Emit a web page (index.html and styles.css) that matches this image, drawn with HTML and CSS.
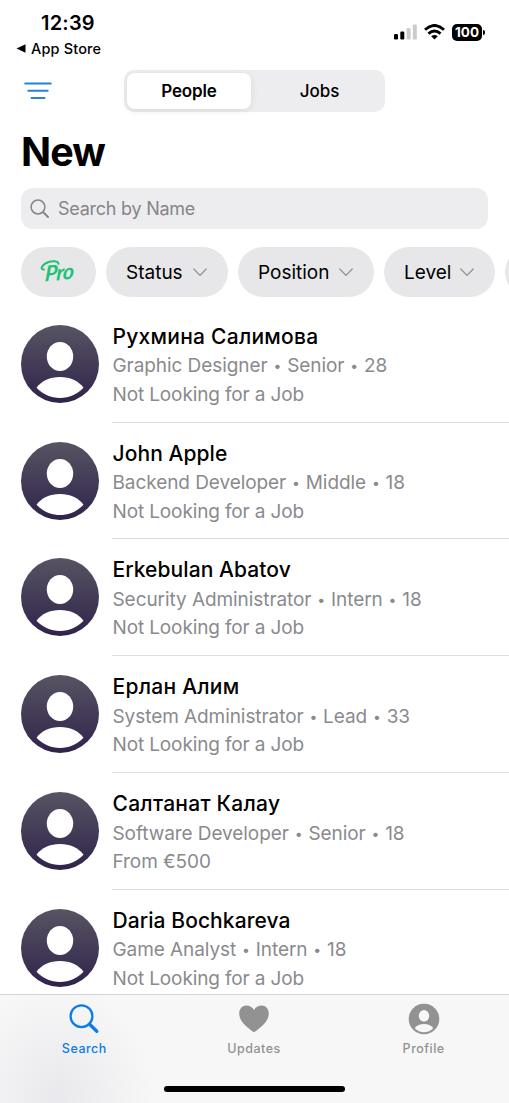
FILE: index.html
```html
<!DOCTYPE html>
<html lang="en">
<head>
<meta charset="utf-8">
<meta name="viewport" content="width=device-width, initial-scale=1">
<title>People</title>
<link rel="stylesheet" href="styles.css">
</head>
<body>
<svg class="defs" width="0" height="0" aria-hidden="true">
  <defs>
    <linearGradient id="avatar-fill" x1="0" y1="0" x2="0" y2="1"><stop offset="0" stop-color="#575463"/><stop offset="1" stop-color="#30234b"/></linearGradient>
    <symbol id="avatar" viewBox="0 0 78 78"><circle cx="39" cy="39" r="39" fill="url(#avatar-fill)"/><ellipse cx="39" cy="31.5" rx="13.2" ry="14.6" fill="#fff"/><path d="M15.5 62.7C20.500 56 29 52 39 52s18.500 4 23.500 10.700C56.500 69.200 48 73 39 73s-17.500-3.800-23.500-10.300Z" fill="#fff"/></symbol>
    <symbol id="chevron" viewBox="0 0 14 9"><path d="M.8 1 7 7.400 13.200 1" fill="none" stroke="#929297" stroke-width="1.300" stroke-linecap="round" stroke-linejoin="round"/></symbol>
  </defs>
</svg>
<div class="screen">
  <header class="status">
    <div class="status-left">
      <div class="clock">12:39</div>
      <div class="back"><svg width="10" height="9" viewBox="0 0 10 9"><path d="M.5 4.500 9.500.3v8.400Z"/></svg><span>App Store</span></div>
    </div>
    <div class="status-right">
      <svg width="23" height="16" viewBox="0 0 23 16"><rect x="0" y="10" width="4" height="5.500" rx="1.200"/><rect x="6.300" y="7.500" width="4" height="8" rx="1.200"/><g fill="#cbcbcb"><rect x="12.600" y="4" width="4" height="11.500" rx="1.200"/><rect x="18.800" y=".5" width="4" height="15" rx="1.200"/></g></svg>
      <svg class="wifi" width="21" height="16" viewBox="0 0 21 16"><g fill="none" stroke="#000" stroke-width="2.900"><path d="M1 5.800Q10.500-2.900 20 5.800"/><path d="M4.500 9.700Q10.500 4.400 16.500 9.700"/></g><path d="M7.200 12.300Q10.500 9.800 13.800 12.300L10.500 15.600Z"/></svg>
      <div class="battery">100</div><i class="battery-tip"></i>
    </div>
  </header>
  <nav class="topbar">
    <svg class="filter" width="28" height="20" viewBox="0 0 28 20"><g stroke="#2583d8" stroke-width="2" stroke-linecap="round"><path d="M1.200 2.500h25.600M4.300 9.800h19.400M7.500 17h13"/></g></svg>
    <div class="segments"><div class="segment active">People</div><div class="segment">Jobs</div></div>
  </nav>
  <h1>New</h1>
  <div class="search"><svg width="20" height="20" viewBox="0 0 20 20"><g fill="none" stroke="#85858a" stroke-linecap="round"><circle cx="8" cy="8" r="6.900" stroke-width="1.500"/><path d="m13.200 13.200 4.800 4.800" stroke-width="2"/></g></svg><span>Search by Name</span></div>
  <div class="filters">
    <div class="chip pro"><span>Pro</span><svg width="24" height="14" viewBox="0 0 24 14"><path d="M4 9.500C-.5 9.500 2 4.500 8 2.200c4.500-1.700 10-1.200 10.500 1.600" fill="none" stroke="#20c374" stroke-width="2" stroke-linecap="round"/></svg></div>
    <div class="chip status-chip"><span>Status</span><svg width="14" height="9"><use href="#chevron"/></svg></div>
    <div class="chip position-chip"><span>Position</span><svg width="14" height="9"><use href="#chevron"/></svg></div>
    <div class="chip level-chip"><span>Level</span><svg width="14" height="9"><use href="#chevron"/></svg></div>
    <div class="chip next-chip"></div>
  </div>
  <main class="list">
    <article class="person"><svg class="avatar"><use href="#avatar"/></svg><div class="info"><h2 lang="ru">Рухмина Салимова</h2><p>Graphic Designer <b>•</b> Senior <b>•</b> 28</p><p class="availability">Not Looking for a Job</p></div></article>
    <article class="person"><svg class="avatar"><use href="#avatar"/></svg><div class="info"><h2>John Apple</h2><p>Backend Developer <b>•</b> Middle <b>•</b> 18</p><p class="availability">Not Looking for a Job</p></div></article>
    <article class="person"><svg class="avatar"><use href="#avatar"/></svg><div class="info"><h2>Erkebulan Abatov</h2><p>Security Administrator <b>•</b> Intern <b>•</b> 18</p><p class="availability">Not Looking for a Job</p></div></article>
    <article class="person"><svg class="avatar"><use href="#avatar"/></svg><div class="info"><h2 lang="ru">Ерлан Алим</h2><p>System Administrator <b>•</b> Lead <b>•</b> 33</p><p class="availability">Not Looking for a Job</p></div></article>
    <article class="person"><svg class="avatar"><use href="#avatar"/></svg><div class="info"><h2 lang="ru">Салтанат Калау</h2><p>Software Developer <b>•</b> Senior <b>•</b> 18</p><p>From €500</p></div></article>
    <article class="person"><svg class="avatar"><use href="#avatar"/></svg><div class="info"><h2>Daria Bochkareva</h2><p>Game Analyst <b>•</b> Intern <b>•</b> 18</p><p class="availability">Not Looking for a Job</p></div></article>
  </main>
  <footer class="tabbar">
    <div class="tabs">
      <div class="tab selected"><svg width="32" height="32" viewBox="0 0 32 32"><g fill="none" stroke="#0d7bea" stroke-linecap="round"><circle cx="13.500" cy="13.200" r="10.900" stroke-width="2.300"/><path d="m21.600 21.300 7.200 7" stroke-width="3.300"/></g></svg><span>Search</span></div>
      <div class="tab"><svg width="32" height="32" viewBox="0 0 32 32"><path d="M16 29.300C9 24.500 1.200 18.200 1.200 10.600 1.200 5.700 4.300 2.400 8.500 2.400c3.200 0 5.900 1.700 7.500 4.500 1.600-2.800 4.300-4.500 7.500-4.500 4.200 0 7.300 3.300 7.300 8.200 0 7.600-7.800 13.900-14.800 18.700Z" fill="#929292"/></svg><span>Updates</span></div>
      <div class="tab"><svg width="32" height="32" viewBox="0 0 32 32"><circle cx="16" cy="16" r="15.300" fill="#929292"/><ellipse cx="16" cy="12.800" rx="5.200" ry="5.800" fill="#f7f7f7"/><path d="M6.800 25.200c2-2.600 5.300-4.100 9.200-4.100s7.200 1.500 9.200 4.100c-2.400 2.600-5.600 4-9.200 4s-6.800-1.400-9.200-4Z" fill="#f7f7f7"/></svg><span>Profile</span></div>
    </div>
    <div class="home"></div>
  </footer>
</div>
</body>
</html>
```
FILE: styles.css
```css
* { box-sizing: border-box; }
body { margin: 0; background: #fff; color: #000; font-family: Inter, "Liberation Sans", sans-serif; }
h1, h2, p { margin: 0; }
svg { display: block; flex: none; }
.defs { position: absolute; }
.screen { width: 509px; height: 1103px; display: flex; flex-direction: column; overflow: hidden; }
.screen > * { flex: none; }

.status { height: 70px; display: flex; justify-content: space-between; padding: 11px 24px 0 16px; }
.clock { padding-left: 25px; font-size: 20px; line-height: 24px; font-weight: 600; letter-spacing: .2px; }
.back { display: flex; align-items: center; gap: 5px; margin-top: 5px; font-size: 14.5px; line-height: 17px; font-weight: 500; letter-spacing: .15px; }
.status-right { display: flex; height: 18px; margin-top: 12px; align-items: center; }
.wifi { margin-left: 7px; }
.battery { width: 30px; height: 17px; margin-left: 7px; border-radius: 5px; background: #000; color: #fff; font-size: 13.500px; line-height: 17px; font-weight: 700; text-align: center; }
.battery-tip { width: 2px; height: 5px; margin-left: 1px; border-radius: 0 2px 2px 0; background: #000; }

.topbar { height: 42px; display: flex; align-items: center; padding-left: 24px; }
.segments { display: flex; width: 261px; height: 42px; margin-left: 72px; padding: 3px; border-radius: 10px; background: #ededef; }
.segment { flex: 1; display: flex; align-items: center; justify-content: center; padding-left: 6px; font-size: 17px; font-weight: 500; }
.segment.active { flex: 0 0 124px; padding-left: 0; border-radius: 8px; background: #fff; font-weight: 600; letter-spacing: -.15px; box-shadow: 0 2px 8px rgba(0, 0, 0, .08); }

h1 { height: 76px; padding: 16px 0 0 21px; font-size: 39.500px; line-height: 48px; font-weight: 700; letter-spacing: -.9px; }
.search { height: 41px; margin: 0 21px 0 21px; padding-left: 9px; display: flex; align-items: center; gap: 8px; border-radius: 12px; background: #ededef; color: #85858a; font-size: 18px; letter-spacing: -.25px; }

.filters { display: flex; gap: 10px; height: 50px; margin: 18px 0 0 21px; overflow: hidden; }
.chip { display: flex; flex: none; align-items: center; justify-content: space-between; padding: 0 21px 0 20px; border-radius: 25px; background: #e7e7e9; font-size: 19px; }
.pro { position: relative; width: 75px; justify-content: center; padding: 0; color: #20c374; font-family: Lato, sans-serif; font-size: 21.500px; font-style: italic; font-weight: 700; letter-spacing: -.8px; }
.pro span { transform: translateX(1px) rotate(-6deg) skewX(-10deg); }
.pro svg { position: absolute; left: 19px; top: 13px; }
.status-chip { width: 122px; }
.position-chip { width: 136px; }
.level-chip { width: 111px; }
.next-chip { width: 100px; }

.list { flex: 1; min-height: 0; padding-top: 8.800px; overflow: hidden; }
.person { display: flex; height: 116.800px; padding-left: 21px; gap: 13px; }
.avatar { width: 78px; height: 78px; margin-top: 19px; }
.info { flex: 1; padding-top: 17px; border-bottom: 1px solid #dedee0; }
.info h2 { margin-left: .5px; font-size: 21px; line-height: 28px; font-weight: 500; letter-spacing: .08px; }
.info h2:lang(ru) { letter-spacing: .26px; }
.info p { position: relative; top: 1.700px; margin-left: .5px; font-size: 19px; line-height: 28.300px; color: #8a8a8e; letter-spacing: -.07px; }
.info .availability { letter-spacing: -.13px; }
.info b { display: inline-block; width: 9px; font-size: 14px; font-weight: 400; line-height: 1; text-align: center; transform: translateY(-1.500px); }

.tabbar { height: 109px; border-top: 1px solid #d3d3d5; background: radial-gradient(ellipse 95px 110px at 58px 100px, #e9e9ed, #f7f7f7 100%, transparent), #f7f7f7; }
.tabs { display: grid; grid-template-columns: repeat(3, 1fr); height: 91px; }
.tab { display: flex; flex-direction: column; align-items: center; padding-top: 8px; color: #929292; font-size: 12.500px; line-height: 16px; font-weight: 500; gap: 6px; letter-spacing: .5px; }
.tab svg { margin-right: 1px; }
.tab span { margin-right: 1px; }
.selected { color: #0d7bea; }
.home { width: 181px; height: 6px; margin: 0 auto; border-radius: 3px; background: #000; }
```
